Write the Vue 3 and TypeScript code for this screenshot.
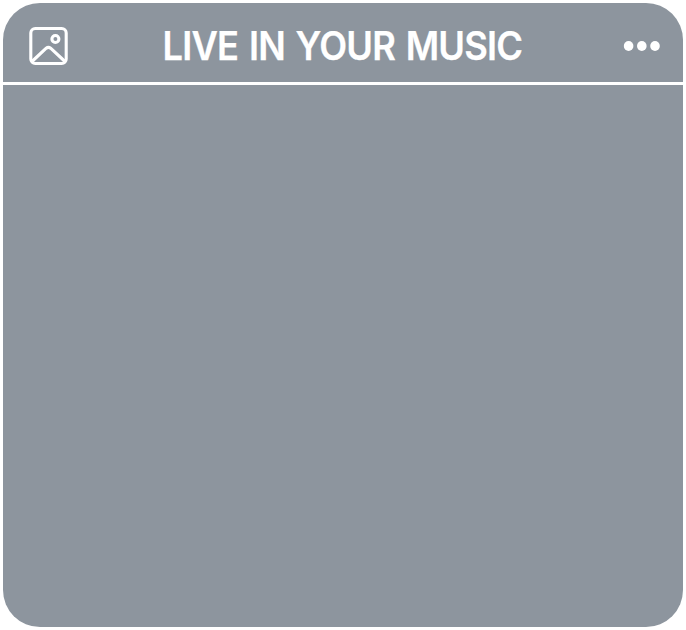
<script setup lang="ts">
const title: string = 'LIVE IN YOUR MUSIC'
const dots: number[] = [5.6, 18.8, 32]
</script>

<template>
  <main class="page">
    <section class="card">
      <header class="header">
        <svg class="picture" viewBox="0 0 40 40" aria-hidden="true">
          <rect x="2.8" y="2.5" width="35.4" height="35" rx="4.5" />
          <circle cx="27.4" cy="13" r="3.5" />
          <path d="M4 35.5 18.2 22.2Q20.4 20.4 22.6 22.2L37 35.5" />
        </svg>
        <h1 class="title">{{ title }}</h1>
        <svg class="more" viewBox="0 0 38 12" aria-hidden="true">
          <ellipse v-for="x in dots" :key="x" :cx="x" cy="6" rx="4.8" ry="5" />
        </svg>
      </header>
      <div class="content"></div>
    </section>
  </main>
</template>

<style>
body {
  background: #fff;
}
</style>

<style scoped>
.page {
  box-sizing: border-box;
  width: 686px;
  height: 630px;
  padding: 3px;
}
.card {
  display: flex;
  flex-direction: column;
  height: 624px;
  border-radius: 37px;
  overflow: hidden;
  background: #8d959e;
}
.header {
  box-sizing: border-box;
  display: flex;
  align-items: center;
  justify-content: space-between;
  height: 82px;
  padding: 6px 22px 0 25px;
  border-bottom: 3px solid #fff;
}
.content {
  flex: 1;
}
.title {
  margin: 0 6px 0 0;
  color: #fff;
  font: 600 39px/48px Inter, sans-serif;
  letter-spacing: -0.86px;
  word-spacing: 2.5px;
  white-space: nowrap;
  transform: scaleX(0.93);
  -webkit-text-stroke: 0.25px #fff;
}
.picture {
  width: 40px;
  height: 40px;
  fill: none;
  stroke: #fff;
  stroke-width: 3.1;
}
.more {
  width: 38px;
  height: 12px;
  fill: #fff;
}
</style>
